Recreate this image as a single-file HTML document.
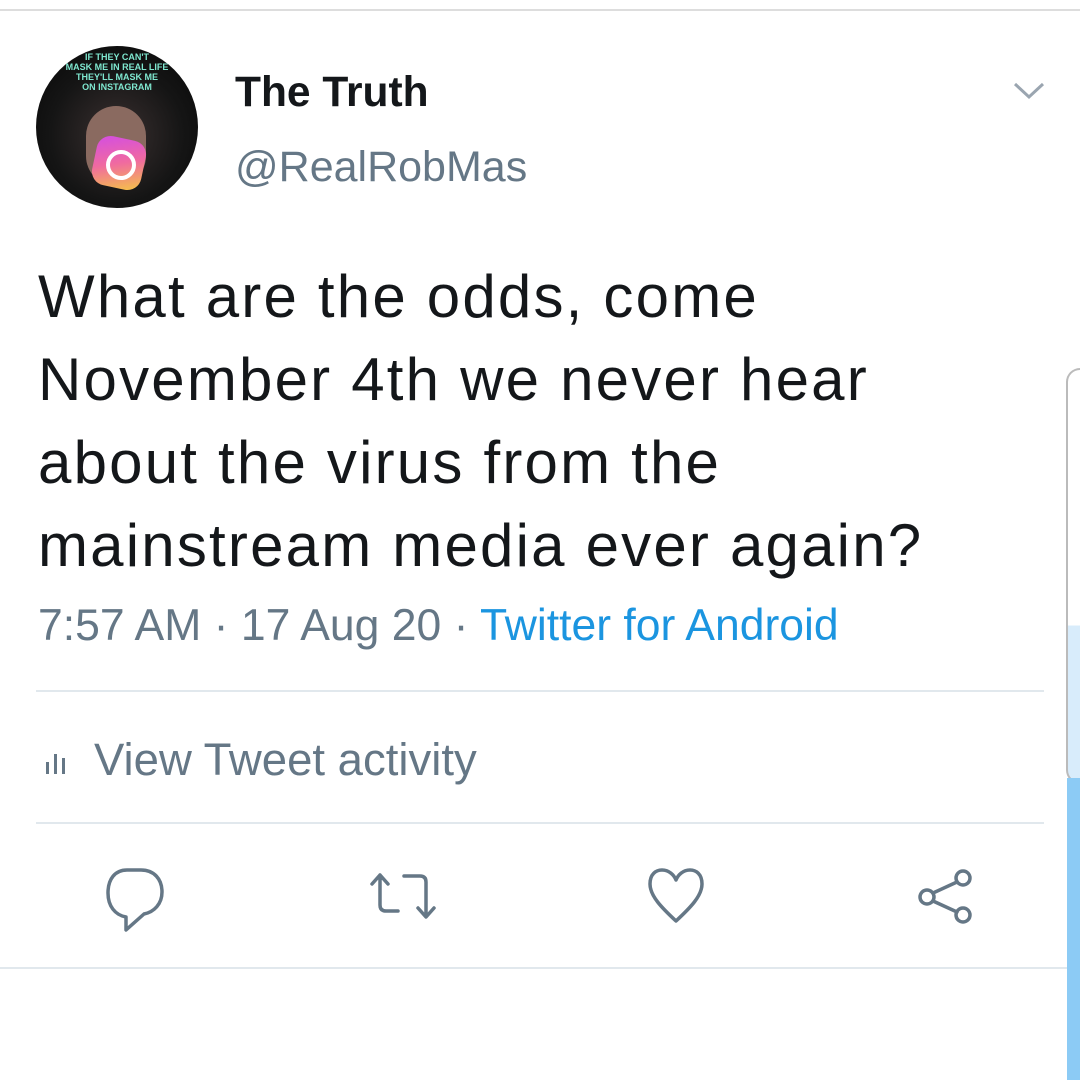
<!DOCTYPE html>
<html><head><meta charset="utf-8"><style>
body{margin:0;width:1080px;height:1080px;background:#fff;position:relative;overflow:hidden;font-family:"Liberation Sans",Arial,sans-serif}
.a{position:absolute;white-space:nowrap}
</style></head><body>
<div class="a" style="left:0;top:9px;width:1080px;height:2px;background:#ddd"></div>
<div class="a" style="left:36px;top:46px;width:162px;height:162px;border-radius:50%;background:radial-gradient(circle at 50% 55%,#3a3030 0%,#151515 55%,#050505 100%);overflow:hidden">
  <div class="a" style="left:0;top:6px;width:162px;text-align:center;color:#7fe8d0;font-size:9px;font-weight:bold;line-height:10px">IF THEY CAN'T<br>MASK ME IN REAL LIFE<br>THEY'LL MASK ME<br>ON INSTAGRAM</div>
  <div class="a" style="left:50px;top:60px;width:60px;height:80px;border-radius:30px;background:#8a6a60"></div>
  <div class="a" style="left:58px;top:92px;width:50px;height:50px;border-radius:14px;transform:rotate(12deg);background:linear-gradient(160deg,#d24ce6,#f06aa0 50%,#f5c842)"></div>
  <div class="a" style="left:70px;top:104px;width:22px;height:22px;border-radius:50%;border:4px solid #fff"></div>
</div>
<div class="a" style="left:235px;top:69px;font-size:42.5px;font-weight:bold;color:#14171a">The Truth</div>
<div class="a" style="left:235px;top:143px;font-size:43px;color:#657786">@RealRobMas</div>
<svg class="a" style="left:1012px;top:80px" width="34" height="22" viewBox="0 0 34 22"><path d="M3 4 L17 17 L31 4" fill="none" stroke="#9aa5b0" stroke-width="3"/></svg>
<div class="a" style="left:38px;top:255px;font-size:60px;letter-spacing:2.2px;line-height:83px;color:#14171a">What are the odds, come<br>November 4th we never hear<br>about the virus from the<br>mainstream media ever again?</div>
<div class="a" style="left:38px;top:601px;font-size:44.5px;color:#657786">7:57 AM · 17 Aug 20 · <span style="color:#1b95e0">Twitter for Android</span></div>
<div class="a" style="left:36px;top:690px;width:1008px;height:2px;background:#e1e8ed"></div>
<svg class="a" style="left:44px;top:750px" width="26" height="26"><g fill="#657786"><rect x="2" y="12" width="3" height="12"/><rect x="10" y="4" width="3" height="20"/><rect x="18" y="8" width="3" height="16"/></g></svg>
<div class="a" style="left:94px;top:734px;font-size:45.5px;color:#657786">View Tweet activity</div>
<div class="a" style="left:36px;top:822px;width:1008px;height:2px;background:#e1e8ed"></div>
<svg class="a" style="left:0;top:850px" width="1080" height="100" viewBox="0 0 1080 100" fill="none" stroke="#657786" stroke-width="3.5" stroke-linejoin="round" stroke-linecap="round">
<path d="M127 20 H141 C154 20 162 29 162 42 C162 54 154 62 144 64 L126 80 L126 67 C115 65 108 56 108 43 C108 29 115 20 127 20Z"/>
<path d="M380 25 L380 55 C380 59 382 61 386 61 L398 61 M372 34 L380 25 L388 34 M404 26 L420 26 C424 26 426 28 426 32 L426 66 M418 58 L426 67 L434 58"/>
<path d="M676 71 C662 58 650 46 650 34 C650 24 656 20 662 20 C669 20 674 25 676 30 C678 25 683 20 690 20 C696 20 702 24 702 34 C702 46 690 58 676 71Z"/>
<circle cx="963" cy="28" r="7"/><circle cx="927" cy="47" r="7"/><circle cx="963" cy="65" r="7"/>
<path d="M933 43 L957 32 M933 51 L957 62"/>
</svg>
<div class="a" style="left:0;top:967px;width:1067px;height:2px;background:#e1e8ed"></div>
<div class="a" style="left:1066px;top:368px;width:30px;height:412px;border:2px solid #bbb;border-right:none;border-radius:14px 0 0 14px;background:linear-gradient(#fff 0,#fff 62%,#d8ecfb 62%)"></div>
<div class="a" style="left:1067px;top:778px;width:13px;height:302px;background:#8ccbf5"></div>
</body></html>
